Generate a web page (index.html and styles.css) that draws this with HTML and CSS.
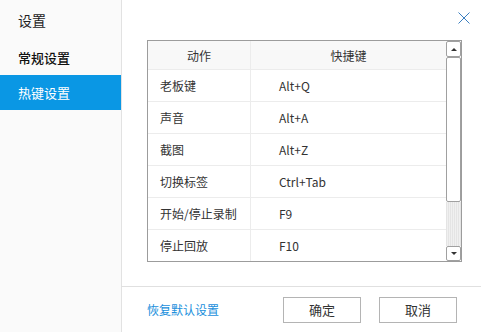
FILE: index.html
```html
<!DOCTYPE html>
<html lang="zh-CN">
<head>
<meta charset="utf-8">
<title>设置</title>
<link rel="stylesheet" href="styles.css">
</head>
<body>
<div class="window">
  <aside class="sidebar">
    <div class="side-title">设置</div>
    <div class="side-item">常规设置</div>
    <div class="side-item active">热键设置</div>
  </aside>
  <main class="main">
    <button class="close" aria-label="关闭">
      <svg width="12" height="12" viewBox="0 0 12 12"><path d="M0.5 0.5 L11.5 11.5 M11.5 0.5 L0.5 11.5" stroke="#3b7fc0" stroke-width="1" fill="none"/></svg>
    </button>
    <section class="content">
      <div class="grid-box">
        <div class="table">
          <div class="row head">
            <div class="cell c1">动作</div>
            <div class="cell c2">快捷键</div>
          </div>
          <div class="row"><div class="cell c1">老板键</div><div class="cell c2">Alt+Q</div></div>
          <div class="row"><div class="cell c1">声音</div><div class="cell c2">Alt+A</div></div>
          <div class="row"><div class="cell c1">截图</div><div class="cell c2">Alt+Z</div></div>
          <div class="row"><div class="cell c1">切换标签</div><div class="cell c2">Ctrl+Tab</div></div>
          <div class="row"><div class="cell c1">开始/停止录制</div><div class="cell c2">F9</div></div>
          <div class="row last"><div class="cell c1">停止回放</div><div class="cell c2">F10</div></div>
        </div>
        <div class="scrollbar">
          <div class="sb-btn up"><span class="tri-up"></span></div>
          <div class="sb-thumb"></div>
          <div class="sb-track"></div>
          <div class="sb-btn down"><span class="tri-down"></span></div>
        </div>
      </div>
    </section>
    <footer class="footer">
      <a class="reset">恢复默认设置</a>
      <div class="actions">
        <button class="btn">确定</button>
        <button class="btn">取消</button>
      </div>
    </footer>
  </main>
</div>
</body>
</html>
```
FILE: styles.css
```css
* { box-sizing: border-box; }
html, body { margin: 0; padding: 0; background: #fff; }
body {
  width: 481px; height: 332px; overflow: hidden;
  font-family: "Noto Sans CJK SC", "Noto Sans", sans-serif;
  color: #333;
}
.window { display: flex; width: 481px; height: 332px; }
.sidebar {
  width: 122px; flex: none;
  background: #fafafa;
  border-right: 1px solid #e2e2e2;
  display: flex; flex-direction: column;
}
.side-title {
  height: 40px; line-height: 40px;
  padding-left: 18px;
  font-size: 14px; color: #222;
}
.side-item {
  height: 35px; line-height: 35px;
  padding-left: 18px;
  font-size: 13px; color: #111; font-weight: 500;
}
.side-item.active { background: #0a97e4; color: #fff; font-weight: 400; }
.main {
  position: relative;
  flex: 1;
  display: flex; flex-direction: column;
}
.close {
  position: absolute; top: 12px; right: 11px;
  width: 12px; height: 12px; padding: 0; border: 0; background: none;
  display: block;
}
.close svg { display: block; }
.content {
  height: 286px; flex: none;
  padding: 40px 0 0 25px;
}
.grid-box {
  width: 315px; height: 222px;
  border: 1px solid #9c9c9c;
  display: flex;
}
.table { width: 298px; flex: none; display: flex; flex-direction: column; }
.row {
  display: flex; height: 32px;
  border-bottom: 1px solid #ececec;
  font-size: 12px;
}
.row.head { height: 29px; background: #f8f8f8; }
.row.last { border-bottom: 0; height: 31px; }
.cell { display: flex; align-items: center; }
.c1 { width: 103px; padding-left: 12px; border-right: 1px solid #ececec; }
.c2 { flex: 1; padding-left: 28px; }
.head .cell { justify-content: center; padding-left: 0; }
.scrollbar {
  width: 15px; flex: none;
  display: flex; flex-direction: column;
}
.sb-btn {
  height: 16px; flex: none;
  background: #fff; border: 1px solid #a0a0a0; border-radius: 2px;
  display: flex; align-items: center; justify-content: center;
}
.sb-btn.down { height: 15px; }
.sb-thumb {
  height: 145px; flex: none;
  background: #fff; border: 1px solid #a0a0a0; border-radius: 2px;
}
.sb-track {
  flex: 1;
  background: repeating-linear-gradient(90deg, #e4e4e4 0 1px, #f0f0f0 1px 2px);
}
.tri-up, .tri-down { width: 0; height: 0; border-left: 3px solid transparent; border-right: 3px solid transparent; }
.tri-up { border-bottom: 3px solid #333; }
.tri-down { border-top: 3px solid #333; }
.footer {
  flex: 1;
  border-top: 1px solid #e0e0e0;
  margin-left: -1px;
  display: flex; align-items: center; justify-content: space-between;
  padding: 0 24px 0 26px;
}
.reset { color: #1a8fdc; font-size: 12px; text-decoration: none; }
.actions { display: flex; gap: 18px; }
.btn {
  width: 78px; height: 26px;
  background: #fff; border: 1px solid #b4b4b4; border-radius: 0;
  font-family: inherit; font-size: 13px; color: #333;
  padding: 0;
}
```
